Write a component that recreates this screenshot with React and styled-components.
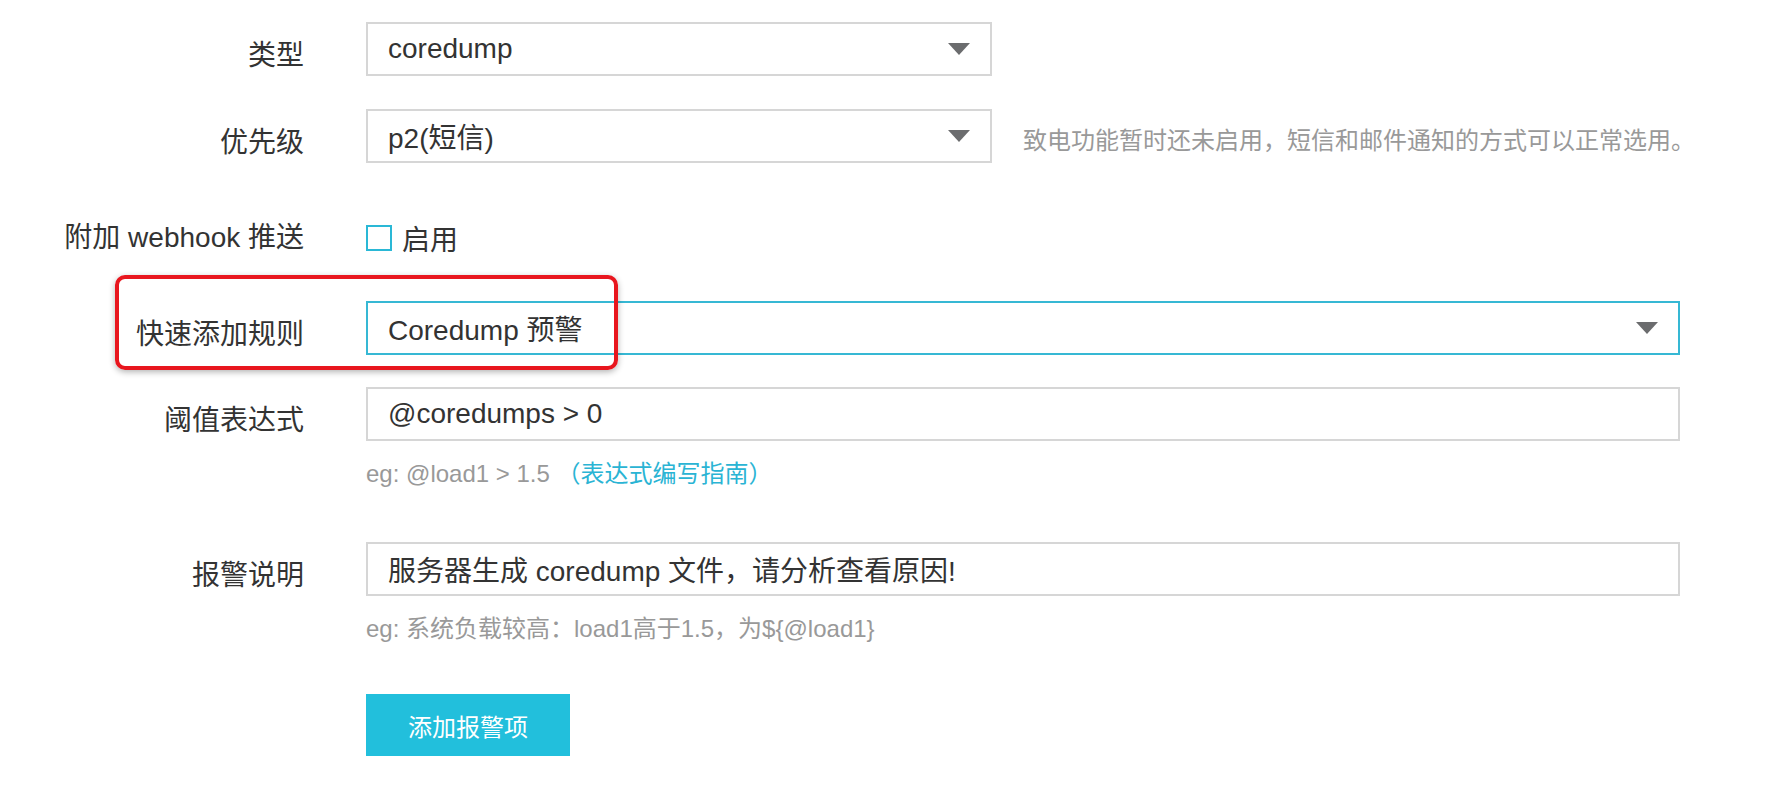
import React from 'react';
import styled, { createGlobalStyle } from 'styled-components';

const GlobalStyle = createGlobalStyle`
    body{
        margin: 0;
        background: #fff;
        font-family: "Liberation Sans", "Noto Sans CJK SC", sans-serif;
        color: #333;
    }
`;

function Arrow() {
    return (
        <ArrowIcon width="22" height="12" viewBox="0 0 22 12">
            <polygon points="0,0 22,0 11,12" fill="#6b6c6e" />
        </ArrowIcon>
    )
}

function App() {
    return (
        <>
            <GlobalStyle />
            <FormStyled>
                <Row>
                    <Label>类型</Label>
                    <Select>
                        <span>coredump</span>
                        <Arrow />
                    </Select>
                </Row>

                <Row $mt={33}>
                    <Label>优先级</Label>
                    <Select>
                        <span>p2(短信)</span>
                        <Arrow />
                    </Select>
                    <Help>致电功能暂时还未启用，短信和邮件通知的方式可以正常选用。</Help>
                </Row>

                <Row $mt={38}>
                    <Label $flat>附加 webhook 推送</Label>
                    <CheckWrap>
                        <CheckBox />
                        <CheckText>启用</CheckText>
                    </CheckWrap>
                </Row>

                <Row $mt={36}>
                    <Mark />
                    <Label>快速添加规则</Label>
                    <Select $wide $active>
                        <span>Coredump 预警</span>
                        <Arrow />
                    </Select>
                </Row>

                <Row $mt={32}>
                    <Label>阈值表达式</Label>
                    <Field>
                        <Input>@coredumps &gt; 0</Input>
                        <Hint>eg: @load1 &gt; 1.5 <a>（表达式编写指南）</a></Hint>
                    </Field>
                </Row>

                <Row $mt={51}>
                    <Label>报警说明</Label>
                    <Field>
                        <Input>服务器生成 coredump 文件，请分析查看原因!</Input>
                        <Hint>eg: 系统负载较高：load1高于1.5，为${'{@load1}'}</Hint>
                    </Field>
                </Row>

                <Row $mt={48}>
                    <Label />
                    <Button>添加报警项</Button>
                </Row>
            </FormStyled>
        </>
    )
}

const FormStyled = styled.div`
    padding-top: 22px;
    width: 1768px;
    display: flex;
    flex-direction: column;
`;

const Row = styled.div`
    position: relative;
    display: flex;
    align-items: flex-start;
    margin-top: ${p => p.$mt || 0}px;
`;

const Label = styled.div`
    box-sizing: border-box;
    width: 304px;
    flex: none;
    margin-right: 62px;
    height: 54px;
    padding-top: ${p => p.$flat ? 0 : 7}px;
    line-height: 54px;
    text-align: right;
    font-size: 28px;
    color: #333;
    white-space: nowrap;
`;

const Select = styled.div`
    box-sizing: border-box;
    width: ${p => p.$wide ? 1314 : 626}px;
    height: 54px;
    border: 2px solid ${p => p.$active ? '#36b8d4' : '#d6d6d6'};
    padding: 0 20px;
    display: flex;
    align-items: center;
    justify-content: space-between;
    font-size: 28px;
    color: #333;
    background: #fff;
`;

const ArrowIcon = styled.svg`
    display: block;
`;

const Help = styled.div`
    margin-left: 31px;
    line-height: 64px;
    font-size: 24px;
    color: #999;
    white-space: nowrap;
`;

const CheckWrap = styled.label`
    display: flex;
    align-items: center;
    height: 54px;
    font-size: 28px;
    color: #333;
`;

const CheckBox = styled.div`
    box-sizing: border-box;
    width: 26px;
    height: 26px;
    border: 2px solid #2ab8d6;
    background: #fff;
`;

const CheckText = styled.span`
    margin-left: 10px;
`;

const Field = styled.div`
    display: flex;
    flex-direction: column;
`;

const Input = styled.div`
    box-sizing: border-box;
    width: 1314px;
    height: 54px;
    border: 2px solid #d6d6d6;
    padding: 0 20px;
    display: flex;
    align-items: center;
    font-size: 28px;
    color: #333;
`;

const Hint = styled.div`
    margin-top: 16px;
    line-height: 34px;
    font-size: 24px;
    color: #999;

    a{
        color: #2ab4d4;
        cursor: pointer;
    }
`;

const Button = styled.button`
    width: 204px;
    height: 62px;
    border: none;
    background: #22bfdc;
    color: #fff;
    font-family: inherit;
    font-size: 24px;
    cursor: pointer;
`;

const Mark = styled.div`
    position: absolute;
    left: 115px;
    top: -26px;
    width: 503px;
    height: 95px;
    box-sizing: border-box;
    border: 4px solid #e8161e;
    border-radius: 10px;
    box-shadow: 0 2px 6px rgba(0,0,0,.3);
    pointer-events: none;
    z-index: 2;
`;

export default App;
